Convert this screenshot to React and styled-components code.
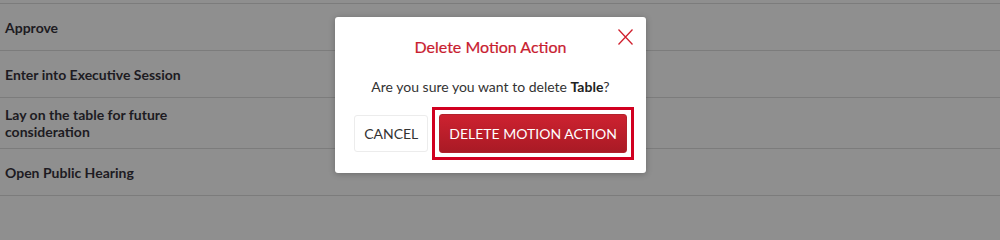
import React from 'react';
import styled, { createGlobalStyle } from 'styled-components';

const GlobalStyle = createGlobalStyle`
  html, body {
    margin: 0;
    padding: 0;
    background: #8f8f8f;
    font-family: Lato, "Open Sans", sans-serif;
  }
`;

const Page = styled.div`
  position: relative;
  width: 1000px;
  height: 209px;
  overflow: hidden;
  background: #8f8f8f;
  padding-top: 3px;
  box-sizing: border-box;
`;

const List = styled.div`
  border-top: 1px solid #7c7c7c;
`;

const Row = styled.div`
  display: flex;
  align-items: center;
  min-height: 47px;
  padding: 8px 5px;
  box-sizing: border-box;
  border-bottom: 1px solid #7c7c7c;
`;

const RowLabel = styled.div`
  width: 180px;
  font-size: 14px;
  font-weight: 700;
  line-height: 17px;
  color: #1d1b22;
`;

const Modal = styled.div`
  position: absolute;
  left: 335px;
  top: 17px;
  width: 311px;
  box-sizing: border-box;
  padding: 20px 20px 20px;
  background: #fff;
  border-radius: 3px;
  box-shadow: 0 1px 6px rgba(0, 0, 0, 0.25);
  text-align: center;
`;

const CloseButton = styled.button`
  position: absolute;
  top: 12px;
  right: 13px;
  width: 15px;
  height: 16px;
  padding: 0;
  border: 0;
  background: none;
  cursor: pointer;
  display: flex;
`;

const Title = styled.h2`
  margin: 0;
  font-size: 16px;
  font-weight: 400;
  line-height: 20px;
  color: #c8202f;
  -webkit-text-stroke: 0.2px #c8202f;
`;

const Message = styled.p`
  margin: 20px 0 0;
  font-size: 14px;
  line-height: 20px;
  color: #333;

  strong {
    font-weight: 700;
    color: #222;
  }
`;

const Footer = styled.div`
  display: flex;
  justify-content: center;
  align-items: center;
  gap: 11px;
  margin-top: 17px;
`;

const Button = styled.button`
  position: relative;
  font-family: Lato, "Open Sans", sans-serif;
  font-size: 14px;
  text-transform: uppercase;
  border-radius: 3px;
  cursor: pointer;
  box-sizing: border-box;
  white-space: nowrap;
`;

const CancelButton = styled(Button)`
  height: 37px;
  padding: 0 9px;
  background: #fff;
  color: #333;
  border: 1px solid #ececec;
`;

const DeleteButton = styled(Button)`
  height: 39px;
  padding: 0 9px;
  color: #fff;
  border: 1px solid #b3222c;
  background: linear-gradient(to bottom, #cd2230, #a91a25);
  outline: none;

  &::after {
    content: '';
    position: absolute;
    inset: -8px;
    border: 3px solid #d10020;
    pointer-events: none;
  }
`;

const motions = [
  'Approve',
  'Enter into Executive Session',
  'Lay on the table for future consideration',
  'Open Public Hearing',
];

export default function App() {
  return (
    <Page>
      <GlobalStyle />
      <List>
        {motions.map((m) => (
          <Row key={m}>
            <RowLabel>{m}</RowLabel>
          </Row>
        ))}
      </List>
      <Modal role="dialog">
        <CloseButton aria-label="Close">
          <svg width="15" height="16" viewBox="0 0 15 16">
            <path d="M0.5 0.5 L14.5 15.5 M14.5 0.5 L0.5 15.5" stroke="#d0202e" strokeWidth="1.3" fill="none" />
          </svg>
        </CloseButton>
        <Title>Delete Motion Action</Title>
        <Message>
          Are you sure you want to delete <strong>Table</strong>?
        </Message>
        <Footer>
          <CancelButton>Cancel</CancelButton>
          <DeleteButton>Delete Motion Action</DeleteButton>
        </Footer>
      </Modal>
    </Page>
  );
}
